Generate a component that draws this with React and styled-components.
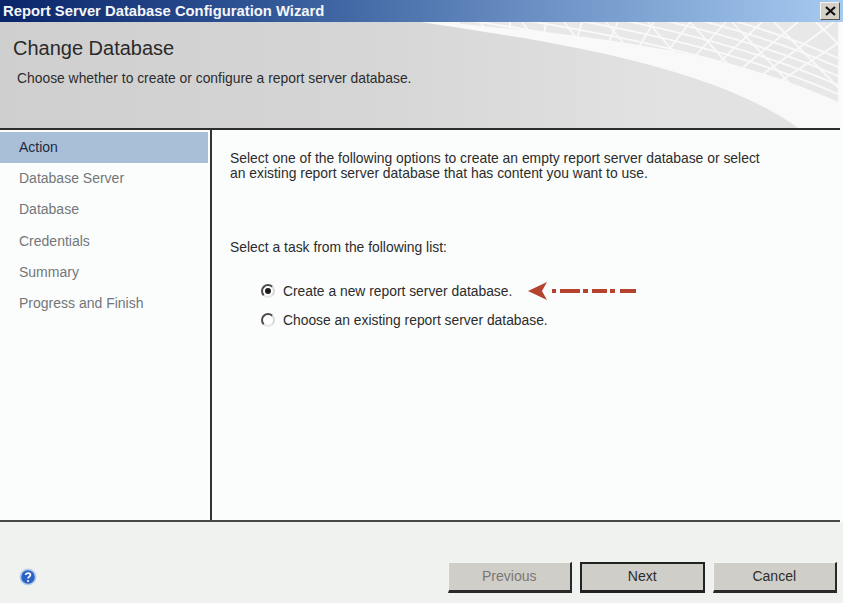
import React from 'react';
import styled, { createGlobalStyle } from 'styled-components';

const GlobalStyle = createGlobalStyle`
  html, body {
    margin: 0;
    padding: 0;
    background: #f0f2f0;
  }
  * {
    box-sizing: border-box;
  }
`;

const Wizard = styled.div`
  width: 843px;
  height: 603px;
  display: flex;
  flex-direction: column;
  overflow: hidden;
  font-family: "Liberation Sans", Arial, sans-serif;
  font-size: 14px;
  color: #2c2c2c;
  background: #fbfdfc;
`;

const TitleBar = styled.div`
  height: 22px;
  flex: none;
  display: flex;
  align-items: center;
  justify-content: space-between;
  padding: 0 3px 0 3px;
  background: linear-gradient(90deg, #0a246a 0%, #2f5495 30%, #6d93c6 65%, #a6caf0 100%);
`;

const TitleText = styled.span`
  font-size: 14.8px;
  font-weight: 700;
  color: #f4f6fa;
`;

const CloseButton = styled.div`
  width: 20px;
  height: 18px;
  display: flex;
  align-items: center;
  justify-content: center;
  background: #d4d0c8;
  border: 1px solid;
  border-color: #f4f4f0 #55534e #55534e #f4f4f0;
`;

const Header = styled.div`
  position: relative;
  height: 108px;
  flex: none;
  padding: 14px 0 0 13px;
  background: linear-gradient(90deg, #cfcfcf 0%, #d6d6d6 45%, #e2e2e2 80%);
  border-bottom: 2px solid #2e2e2e;
  margin-right: 3px;
  overflow: hidden;
`;

const HeaderArt = styled.svg`
  position: absolute;
  top: 0;
  right: 0;
`;

const Heading = styled.div`
  position: relative;
  font-size: 20px;
  line-height: 24px;
  color: #2a2a2a;
`;

const SubHeading = styled.div`
  position: relative;
  margin: 10px 0 0 4px;
  font-size: 13.86px;
  line-height: 16px;
`;

const Body = styled.div`
  flex: 1;
  display: flex;
  min-height: 0;
  margin-right: 3px;
  border-bottom: 2px solid #474a47;
`;

const Sidebar = styled.div`
  width: 212px;
  flex: none;
  padding-top: 1.5px;
  border-right: 2px solid #333;
`;

const Step = styled.div`
  height: 31.2px;
  width: 208px;
  padding-left: 19px;
  display: flex;
  align-items: center;
  font-size: 14px;
  color: ${(p) => (p.$active ? '#1f2a3c' : '#73767a')};
  background: ${(p) => (p.$active ? '#a9bfd8' : 'transparent')};
`;

const Content = styled.div`
  flex: 1;
  padding: 21px 0 0 18px;
`;

const Intro = styled.p`
  margin: 0;
  width: 540px;
  font-size: 13.9px;
  line-height: 15px;
`;

const Prompt = styled.p`
  margin: 58px 0 0;
  font-size: 13.9px;
  line-height: 16px;
`;

const Options = styled.div`
  margin: 27px 0 0 31px;
  display: flex;
  flex-direction: column;
  gap: 11px;
`;

const Option = styled.div`
  position: relative;
  display: flex;
  align-items: center;
  gap: 8px;
  height: 18px;
  font-size: 13.85px;
`;

const Radio = styled.span`
  width: 14px;
  height: 14px;
  flex: none;
  border-radius: 50%;
  display: flex;
  align-items: center;
  justify-content: center;
  background: #fff;
  border: 2px solid;
  border-color: #4c4c4c #d8d8d8 #e6e6e6 #4c4c4c;

  &::after {
    content: '';
    width: 6px;
    height: 6px;
    border-radius: 50%;
    background: ${(p) => (p.$checked ? '#1c1c1c' : 'transparent')};
  }
`;

const Arrow = styled.svg`
  position: absolute;
  left: 267px;
  top: -1px;
`;

const Footer = styled.div`
  flex: none;
  height: 81px;
  display: flex;
  align-items: flex-end;
  justify-content: space-between;
  padding: 0 6px 10px 19px;
  background: #f0f2f0;
`;

const HelpIcon = styled.svg`
  margin-bottom: 7px;
`;

const Buttons = styled.div`
  display: flex;
  gap: 8px;
`;

const Button = styled.div`
  width: 124.5px;
  height: 31px;
  padding-bottom: 2px;
  display: flex;
  align-items: center;
  justify-content: center;
  font-size: 14px;
  color: ${(p) => (p.$disabled ? '#7a7773' : '#2c2c2c')};
  background: #d0cec8;
  border-style: solid;
  border-color: ${(p) => (p.$primary ? '#222' : '#f4f4f0 #2a2a2a #2a2a2a #f4f4f0')};
  border-width: ${(p) => (p.$primary ? '2px 2px 3px 2px' : '1px 2px 3px 1px')};
`;

const steps = ['Action', 'Database Server', 'Database', 'Credentials', 'Summary', 'Progress and Finish'];

// three families of strands for the lattice top right of the header
const bands = [0, 1, 2, 3, 4, 5, 6, 7].map((k) => `M0 ${-k * 9} C120 ${18 - k * 9} 290 ${42 - k * 9} 420 ${100 - k * 9}`);
const spokes = [...Array(11)].map((_, i) => {
  const x = 90 + i * 36;
  return `M${x} 0 L${x - (x - 90) * 0.42} 100`;
});
const diagonals = [...Array(10)].map((_, i) => {
  const x = 60 + i * 42;
  return `M${x} 0 L${x + 70 + i * 4} 100`;
});

const App = () => (
  <Wizard>
    <GlobalStyle />
    <TitleBar>
      <TitleText>Report Server Database Configuration Wizard</TitleText>
      <CloseButton>
        <svg width="11" height="10" viewBox="0 0 11 10">
          <path d="M1 1 L10 9 M10 1 L1 9" stroke="#111" strokeWidth="2.2" fill="none" />
        </svg>
      </CloseButton>
    </TitleBar>

    <Header>
      <HeaderArt width="420" height="106" viewBox="0 0 420 106">
        <defs>
          <clipPath id="lattice-clip">
            <path d="M40 2 C150 12 300 25 418 80 V0 H40 Z" />
          </clipPath>
          <filter id="soft">
            <feGaussianBlur stdDeviation="0.5" />
          </filter>
        </defs>
        <path d="M0 0 C120 18 290 42 378 106 H420 V0 Z" fill="#f8f9f8" />
        <g clipPath="url(#lattice-clip)" filter="url(#soft)">
          <rect width="420" height="106" fill="#e8e8e8" />
          <g stroke="#f8f9f8" strokeWidth="1.8" fill="none">
            {bands.map((d) => (
              <path key={d} d={d} />
            ))}
            {spokes.map((d) => (
              <path key={d} d={d} />
            ))}
            {diagonals.map((d) => (
              <path key={d} d={d} />
            ))}
          </g>
        </g>
      </HeaderArt>
      <Heading>Change Database</Heading>
      <SubHeading>Choose whether to create or configure a report server database.</SubHeading>
    </Header>

    <Body>
      <Sidebar>
        {steps.map((s, i) => (
          <Step key={s} $active={i === 0}>{s}</Step>
        ))}
      </Sidebar>
      <Content>
        <Intro>
          Select one of the following options to create an empty report server database or select
          an existing report server database that has content you want to use.
        </Intro>
        <Prompt>Select a task from the following list:</Prompt>
        <Options>
          <Option>
            <Radio $checked />
            Create a new report server database.
            <Arrow width="110" height="20" viewBox="0 0 110 20">
              <path d="M0 10 L19 1 L14 10 L19 19 Z" fill="#b5432f" />
              <path d="M24 10 H28 M32 10 H52 M55 10 H60 M64 10 H79 M82 10 H87 M92 10 H108" stroke="#b5432f" strokeWidth="4" fill="none" />
            </Arrow>
          </Option>
          <Option>
            <Radio />
            Choose an existing report server database.
          </Option>
        </Options>
      </Content>
    </Body>

    <Footer>
      <HelpIcon width="18" height="18" viewBox="0 0 18 18">
        <circle cx="9" cy="9" r="8.5" fill="#b7cdeb" />
        <circle cx="9" cy="9" r="6.8" fill="#2a62c8" />
        <path d="M6.7 7 C6.9 4.6 11.4 4.6 11.4 7 C11.4 8.8 9 8.7 9 10.6" stroke="#fff" strokeWidth="1.7" fill="none" />
        <circle cx="9" cy="13" r="1.1" fill="#fff" />
      </HelpIcon>
      <Buttons>
        <Button $disabled>Previous</Button>
        <Button $primary>Next</Button>
        <Button>Cancel</Button>
      </Buttons>
    </Footer>
  </Wizard>
);

export default App;
